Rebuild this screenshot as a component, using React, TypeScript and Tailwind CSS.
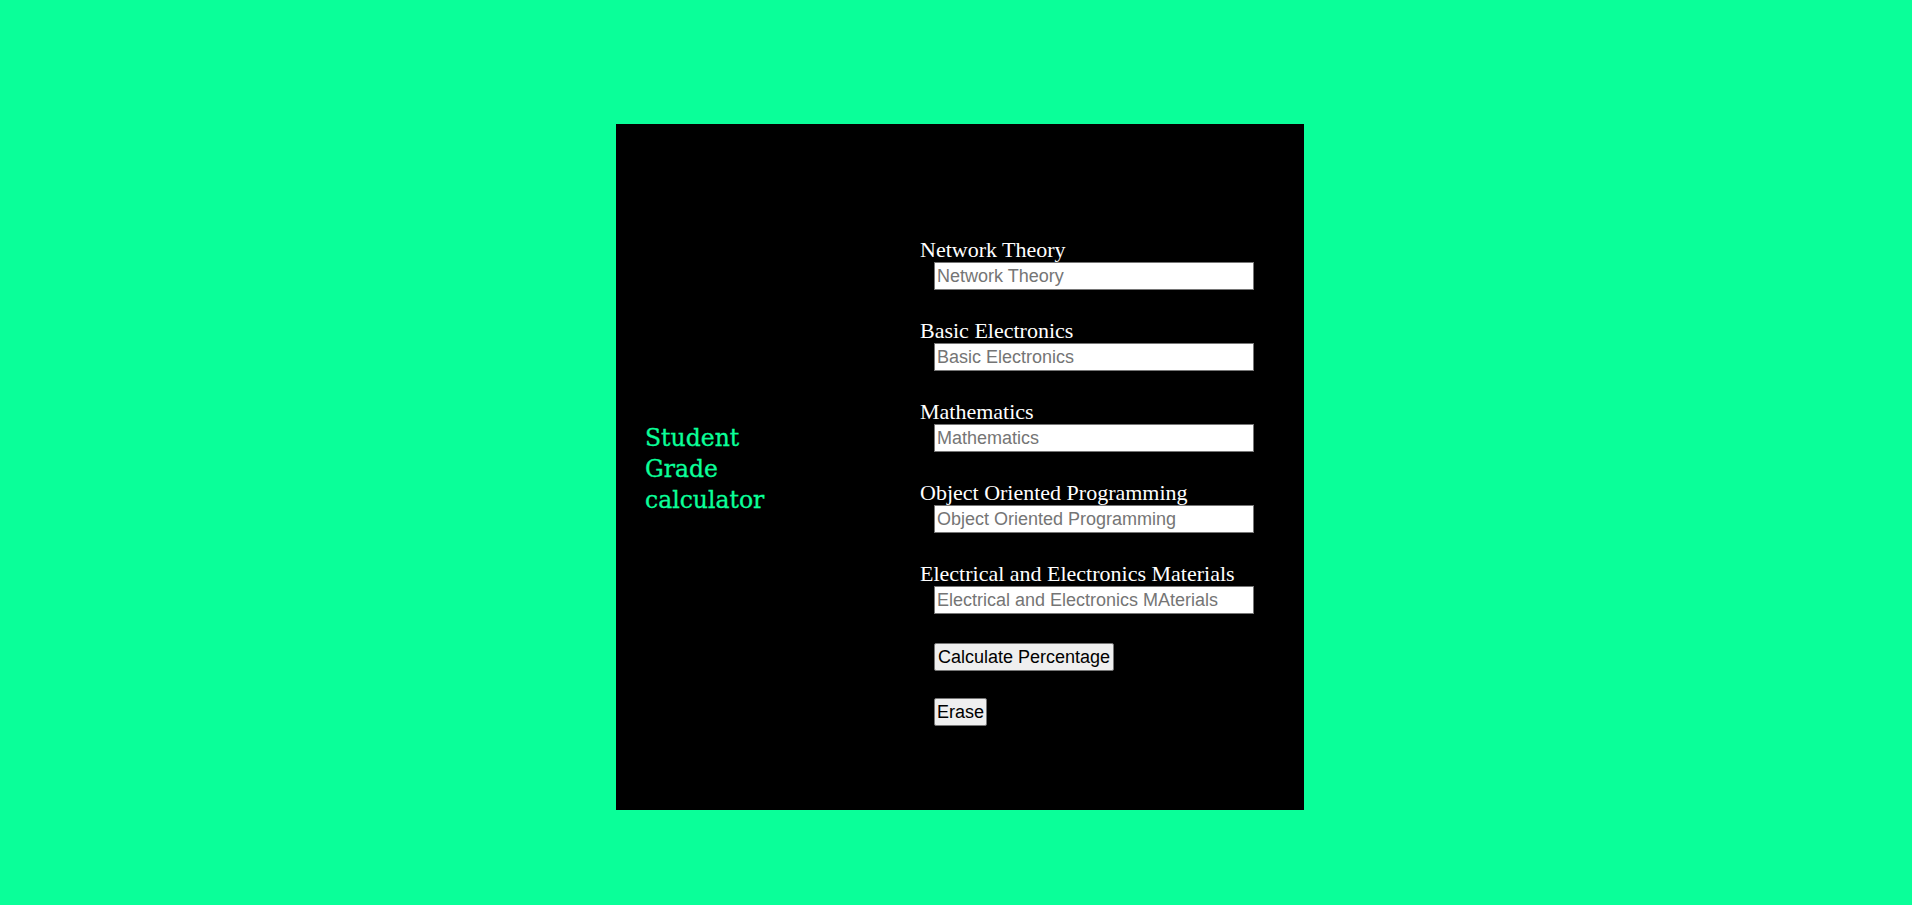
import React from "react";

const SUBJECTS = [
  { label: "Network Theory", placeholder: "Network Theory" },
  { label: "Basic Electronics", placeholder: "Basic Electronics" },
  { label: "Mathematics", placeholder: "Mathematics" },
  { label: "Object Oriented Programming", placeholder: "Object Oriented Programming" },
  { label: "Electrical and Electronics Materials", placeholder: "Electrical and Electronics MAterials" },
];

export default function App() {
  return (
    <div className="min-h-screen bg-[#0aff99] pt-[124px] pl-[8px] flex justify-center items-start">
      <div className="w-[688px] h-[686px] bg-black flex pl-[29px]">
        {/* Title */}
        <div className="w-[275px] flex items-center">
          <h1
            className="w-[140px] text-[#0aff99] text-[23.5px] leading-[31px] pt-[4px]"
            style={{ fontFamily: '"DejaVu Serif", Georgia, serif', WebkitTextStroke: "0.3px #0aff99" }}
          >
            Student Grade calculator
          </h1>
        </div>

        {/* Form */}
        <form className="pt-[114px] flex flex-col" onSubmit={e => e.preventDefault()}>
          {SUBJECTS.map(s => (
            <div key={s.label} className="flex flex-col mb-[29px]">
              <label
                className="text-white text-[22px] leading-[24px]"
                style={{ fontFamily: '"Liberation Serif", "Times New Roman", serif' }}
              >
                {s.label}
              </label>
              <input
                type="number"
                placeholder={s.placeholder}
                className="ml-[14px] w-[320px] h-[28px] bg-white border border-[#767676] px-[2px] text-[18px] text-black placeholder:text-[#757575] outline-none"
                style={{ fontFamily: '"Liberation Sans", Arial, sans-serif' }}
              />
            </div>
          ))}
          <div
            className="ml-[14px] flex flex-col items-start gap-[27px]"
            style={{ fontFamily: '"Liberation Sans", Arial, sans-serif' }}
          >
            <button type="button" className="h-[28px] px-[3px] bg-[#efefef] border border-[#767676] rounded-[2px] text-[18px] leading-none text-black">
              Calculate Percentage
            </button>
            <button type="button" className="h-[28px] px-[2px] bg-[#efefef] border border-[#767676] rounded-[2px] text-[18px] leading-none text-black">
              Erase
            </button>
          </div>
        </form>
      </div>
    </div>
  );
}
